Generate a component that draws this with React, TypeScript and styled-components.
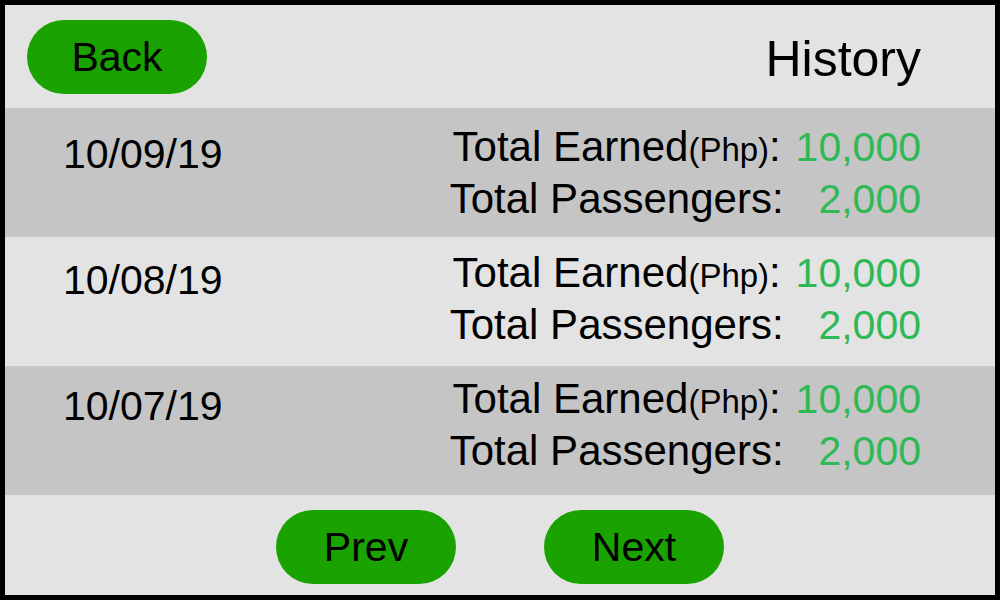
import React from "react";
import styled, { createGlobalStyle } from "styled-components";

const GlobalStyle = createGlobalStyle`
  *, *::before, *::after { box-sizing: border-box; }
  body { margin: 0; background: #e3e3e3; }
`;

const Screen = styled.main`
  display: flex;
  flex-direction: column;
  min-height: 100vh;
  border: 5px solid #000;
  background: #e3e3e3;
  color: #000;
  font-family: "Liberation Sans", Arial, Helvetica, sans-serif;
  font-size: 42px;
  line-height: 52px;
`;

const Header = styled.header`
  display: flex;
  align-items: center;
  justify-content: space-between;
  height: 103px;
  padding: 0 74px 0 22px;
`;

const Title = styled.h1`
  margin: 0;
  padding-top: 4px;
  font-size: 50px;
  font-weight: 400;
  line-height: 56px;
`;

const PillButton = styled.button`
  width: 180px;
  height: 74px;
  padding: 0;
  border: 0;
  border-radius: 37px;
  background: #1aa200;
  color: inherit;
  font: inherit;
  font-size: 41px;
  cursor: pointer;
`;

/* Alternating bands are painted behind the whole list. */
const List = styled.ul`
  display: grid;
  gap: 22px;
  margin: 0;
  padding: 13px 74px 18px 58px;
  list-style: none;
  background: repeating-linear-gradient(
    #c5c5c5 0 129px,
    #e3e3e3 129px 258px
  );
`;

const Entry = styled.li`
  display: flex;
  justify-content: space-between;
`;

const EntryDate = styled.time`
  padding-top: 7px;
  font-size: 41px;
`;

const Totals = styled.dl`
  display: grid;
  grid-template-columns: auto auto;
  grid-auto-rows: 52px;
  column-gap: 12px;
  margin: 0;
`;

const Label = styled.dt`
  text-align: center;
  white-space: nowrap;
`;

const Unit = styled.small`
  font-size: 33px;
`;

const Amount = styled.dd`
  margin: 0;
  color: #2eb956;
  font-size: 41px;
  text-align: right;
`;

const Pager = styled.nav`
  display: flex;
  flex: 1;
  align-items: center;
  justify-content: center;
  gap: 88px;
  padding: 8px 0 4px;
`;

const entries = [
  { date: "10/09/19", earned: "10,000", passengers: "2,000" },
  { date: "10/08/19", earned: "10,000", passengers: "2,000" },
  { date: "10/07/19", earned: "10,000", passengers: "2,000" },
];

export default function App() {
  return (
    <>
      <GlobalStyle />
      <Screen>
        <Header>
          <PillButton type="button">Back</PillButton>
          <Title>History</Title>
        </Header>
        <List>
          {entries.map((entry) => (
            <Entry key={entry.date}>
              <EntryDate>{entry.date}</EntryDate>
              <Totals>
                <Label>
                  Total Earned<Unit>(Php)</Unit>:
                </Label>
                <Amount>{entry.earned}</Amount>
                <Label>Total Passengers:</Label>
                <Amount>{entry.passengers}</Amount>
              </Totals>
            </Entry>
          ))}
        </List>
        <Pager aria-label="History pages">
          <PillButton type="button">Prev</PillButton>
          <PillButton type="button">Next</PillButton>
        </Pager>
      </Screen>
    </>
  );
}
